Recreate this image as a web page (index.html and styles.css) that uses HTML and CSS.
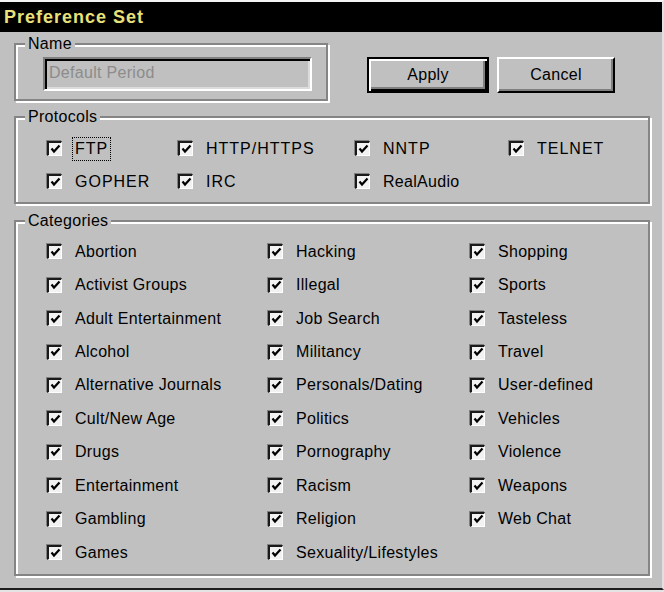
FILE: index.html
```html
<!DOCTYPE html>
<html>
  <head>
    <meta charset="utf-8" />
    <title>Preference Set</title>
    <link rel="stylesheet" href="styles.css">
  </head>
  <body>
    <div class="pref-window">
      <div class="pref-title">Preference Set</div>

      <div class="pref-body">
        <div class="pref-top">
          <div class="pref-group pref-name">
            <span class="pref-group-label">Name</span>
            <div class="pref-field">Default Period</div>
          </div>
          <button class="pref-btn pref-btn-default">Apply</button>
          <button class="pref-btn">Cancel</button>
        </div>

        <!-- protocols: filled column by column -->
        <div class="pref-group pref-protocols">
          <span class="pref-group-label">Protocols</span>
          <div class="pref-grid pref-grid-protocols">
            <label class="pref-check"><span class="pref-box"></span><span class="pref-text pref-focus">FTP</span></label>
            <label class="pref-check"><span class="pref-box"></span><span class="pref-text">GOPHER</span></label>
            <label class="pref-check"><span class="pref-box"></span><span class="pref-text">HTTP/HTTPS</span></label>
            <label class="pref-check"><span class="pref-box"></span><span class="pref-text">IRC</span></label>
            <label class="pref-check"><span class="pref-box"></span><span class="pref-text">NNTP</span></label>
            <label class="pref-check"><span class="pref-box"></span><span class="pref-text pref-mixed">RealAudio</span></label>
            <label class="pref-check"><span class="pref-box"></span><span class="pref-text">TELNET</span></label>
          </div>
        </div>

        <div class="pref-group pref-categories">
          <span class="pref-group-label">Categories</span>
          <div class="pref-grid pref-grid-categories" id="categories"></div>
        </div>
      </div>
    </div>

    <script>
      const CATEGORIES = [
        "Abortion", "Activist Groups", "Adult Entertainment", "Alcohol",
        "Alternative Journals", "Cult/New Age", "Drugs", "Entertainment",
        "Gambling", "Games",
        "Hacking", "Illegal", "Job Search", "Militancy", "Personals/Dating",
        "Politics", "Pornography", "Racism", "Religion", "Sexuality/Lifestyles",
        "Shopping", "Sports", "Tasteless", "Travel", "User-defined",
        "Vehicles", "Violence", "Weapons", "Web Chat"
      ];

      const CHECK_SVG =
        '<svg width="11" height="11" viewBox="0 0 11 11">' +
        '<polyline points="1.5,4.5 4,7.5 9.5,1.5" fill="none" stroke="#000" stroke-width="2.2"/>' +
        "</svg>";

      document.querySelectorAll(".pref-box").forEach(el => (el.innerHTML = CHECK_SVG));

      const list = document.getElementById("categories");
      CATEGORIES.forEach(name => {
        const item = document.createElement("label");
        item.className = "pref-check";
        item.innerHTML =
          '<span class="pref-box">' + CHECK_SVG + "</span>" +
          '<span class="pref-text">' + name + "</span>";
        list.appendChild(item);
      });
    </script>
  </body>
</html>
```

FILE: styles.css
```css
html,
body {
  margin: 0;
  padding: 0;
  background: #e4e4e4;
}

body {
  font-family: "Liberation Sans", Arial, sans-serif;
  font-size: 16px;
  color: #000;
}

.pref-window {
  width: 664px;
  height: 590px;
  box-sizing: border-box;
  background: #c0c0c0;
  border-top: 2px solid #f4f4f4;
  border-right: 2px solid #e0e0e0;
  border-bottom: 2px solid #1c1c1c;
}

.pref-title {
  height: 30px;
  background: #000;
  color: #e8e27a;
  font-weight: bold;
  font-size: 18px;
  letter-spacing: 1px;
  line-height: 30px;
  padding-left: 4px;
}

.pref-body {
  padding: 11px 0 0 14px;
}

.pref-top {
  display: flex;
  align-items: flex-start;
}

/* etched group box */
.pref-group {
  position: relative;
  box-sizing: border-box;
  border: 2px solid #858585;
  box-shadow: inset 2px 2px 0 #fff, 2px 2px 0 #fff;
}

.pref-group-label {
  position: absolute;
  top: -10px;
  left: 9px;
  padding: 0 3px;
  line-height: 18px;
  background: #c0c0c0;
  letter-spacing: 0.3px;
}

.pref-name {
  width: 314px;
  height: 58px;
  padding: 12px 0 0 27px;
}

.pref-field {
  width: 269px;
  height: 34px;
  box-sizing: border-box;
  border-style: solid;
  border-width: 2px;
  border-color: #808080 #fff #fff #808080;
  box-shadow: inset 2px 2px 0 #000, inset -2px -2px 0 #dcdcdc;
  padding: 5px 0 0 4px;
  color: #8c8c8c;
  letter-spacing: 0.3px;
}

.pref-btn {
  height: 36px;
  margin-top: 14px;
  box-sizing: border-box;
  background: #c0c0c0;
  font-family: inherit;
  font-size: 16px;
  letter-spacing: 0.3px;
  color: #000;
  border: 2px solid;
  border-color: #fff #000 #000 #fff;
  box-shadow: inset -2px -2px 0 #808080;
  padding: 0;
  width: 118px;
  margin-left: 8px;
}

.pref-btn-default {
  width: 122px;
  margin-left: 39px;
  border-color: #000;
  box-shadow: inset 2px 2px 0 #fff, inset -2px -2px 0 #000,
    inset -4px -4px 0 #808080;
}

.pref-protocols {
  width: 636px;
  height: 88px;
  margin-top: 15px;
  padding: 14px 0 0 31px;
}

.pref-categories {
  width: 636px;
  height: 356px;
  margin-top: 16px;
  padding: 13px 0 0 31px;
}

.pref-grid {
  display: grid;
  grid-auto-flow: column;
}

.pref-grid-protocols {
  grid-template-rows: repeat(2, 33px);
  grid-template-columns: 131px 177px 154px 1fr;
}

.pref-grid-categories {
  grid-template-rows: repeat(10, 33.45px);
  grid-template-columns: 221px 202px 1fr;
}

.pref-check {
  display: flex;
  align-items: center;
}

.pref-box {
  width: 15px;
  height: 15px;
  box-sizing: border-box;
  margin-right: 13px;
  display: flex;
  align-items: center;
  justify-content: center;
  background: #f2f2f2;
  border-style: solid;
  border-width: 2px 1px 1px 2px;
  border-color: #1a1a1a #fff #fff #1a1a1a;
  box-shadow: -1px -1px 0 #808080;
}

.pref-text {
  letter-spacing: 0.3px;
  line-height: 18px;
}

.pref-grid-protocols .pref-text {
  letter-spacing: 1px;
}

.pref-grid-protocols .pref-mixed {
  letter-spacing: 0.3px;
}

.pref-focus {
  outline: 1px dotted #000;
  outline-offset: 2px;
}
```
